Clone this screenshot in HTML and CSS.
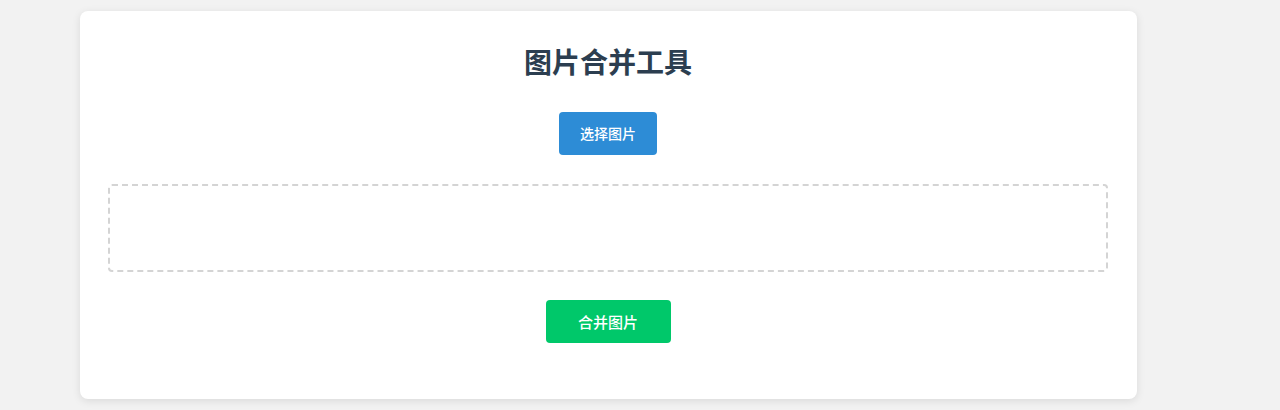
FILE: index.html
```html
<!DOCTYPE html>
<html lang="zh-CN">
<head>
<meta charset="utf-8">
<title>图片合并工具</title>
<link rel="stylesheet" href="styles.css">
</head>
<body>
<div class="card">
  <h1 class="title">图片合并工具</h1>
  <div class="actions">
    <button class="btn btn-select">选择图片</button>
  </div>
  <div class="dropzone"></div>
  <div class="actions actions-merge">
    <button class="btn btn-merge">合并图片</button>
  </div>
</div>
</body>
</html>
```
FILE: styles.css
```css
html, body {
  margin: 0;
  padding: 0;
}
body {
  background: #f2f2f2;
  font-family: "Noto Sans CJK SC", "Noto Sans", sans-serif;
  padding: 11px 0 0 80px;
  height: 410px;
  box-sizing: border-box;
}
.card {
  width: 1000px;
  padding: 27px 29px 56px 28px;
  background: #fff;
  border-radius: 8px;
  box-shadow: 0 2px 8px rgba(0, 0, 0, 0.1);
}
.title {
  margin: 0;
  text-align: center;
  font-size: 28px;
  line-height: 46px;
  font-weight: 700;
  color: #2c3e50;
}
.actions {
  display: flex;
  justify-content: center;
  margin-top: 28px;
}
.btn {
  border: none;
  border-radius: 4px;
  color: #fff;
  font-family: "Noto Sans CJK SC", "Noto Sans", sans-serif;
  font-size: 14px;
  font-weight: 500;
  line-height: 19px;
  height: 43px;
  cursor: pointer;
}
.btn-select {
  background: #2d8cd6;
  padding: 0;
  width: 98px;
}
.btn-merge {
  background: #00c86a;
  font-size: 15px;
  width: 125px;
  padding: 0;
}
.dropzone {
  margin-top: 29px;
  height: 84px;
  border: 2px dashed #d4d4d4;
  border-radius: 4px;
}
.actions-merge {
  margin-top: 28px;
}
```
